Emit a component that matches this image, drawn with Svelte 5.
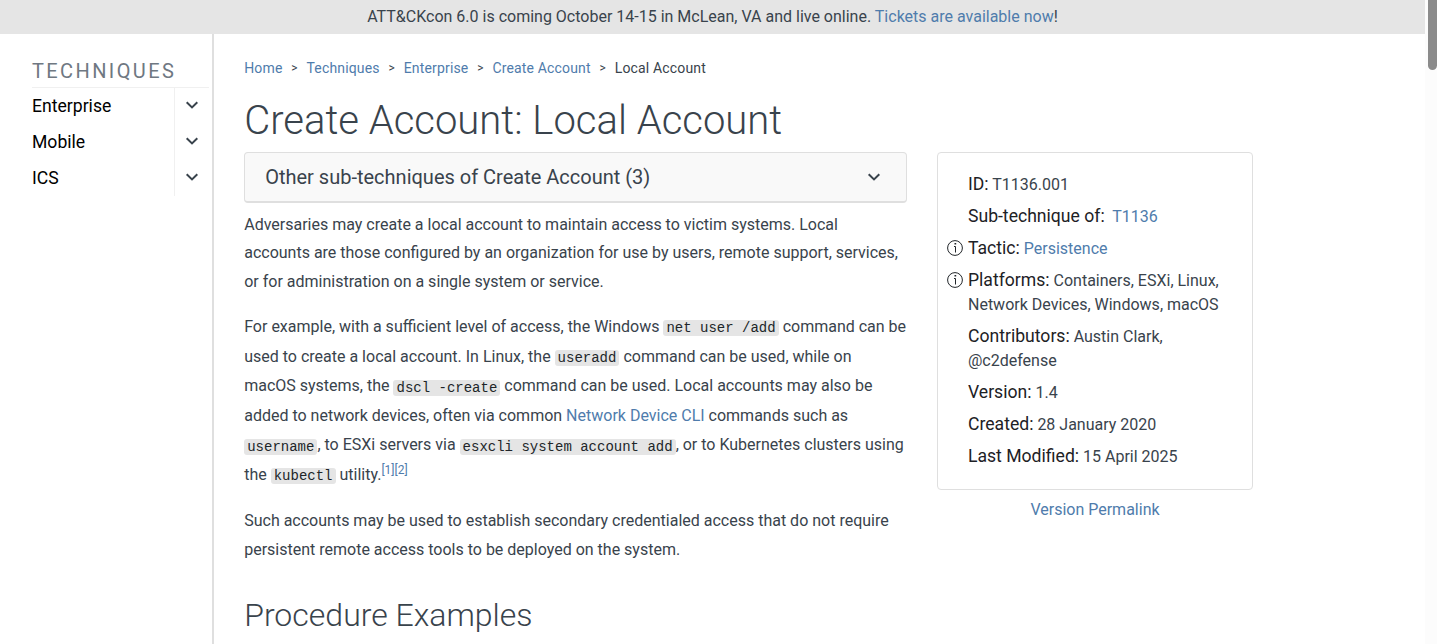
<script>
  const sections = ['Enterprise', 'Mobile', 'ICS'];
  const crumbs = ['Home', 'Techniques', 'Enterprise', 'Create Account'];
</script>

{#snippet chevron()}
  <svg class="chevron" width="14" height="10" viewBox="0 0 14 10" aria-hidden="true">
    <path d="M1.7 2.2 L7 7.4 L12.3 2.2" />
  </svg>
{/snippet}

{#snippet info()}
  <svg class="info" width="16" height="16" viewBox="0 0 16 16" aria-hidden="true">
    <circle cx="8" cy="8" r="7.4" />
    <path d="M7 6.5H8.5V12.5" />
    <rect x="7.5" y="3" width="1.7" height="1.5" />
  </svg>
{/snippet}

<div class="page">
  <div class="view">
    <div class="banner">
      ATT&amp;CKcon 6.0 is coming October 14-15 in McLean, VA and live online. <a href="#tickets">Tickets are available now</a>!
    </div>
    <div class="body">
      <nav class="sidebar">
        <div class="nav-title">TECHNIQUES</div>
        {#each sections as name}
          <div class="nav-row">
            <span class="nav-name">{name}</span>
            <span class="nav-toggle">{@render chevron()}</span>
          </div>
        {/each}
      </nav>
      <main>
        <div class="crumbs">
          {#each crumbs as crumb}
            <a href="#crumb">{crumb}</a><span class="sep">&gt;</span>
          {/each}
          <span>Local Account</span>
        </div>
        <h1>Create Account: Local Account</h1>
        <div class="columns">
          <article>
            <div class="subs">
              <span>Other sub-techniques of Create Account (3)</span>
              {@render chevron()}
            </div>
            <p class="intro">Adversaries may create a local account to maintain access to victim systems. Local<br />accounts are those configured by an organization for use by users, remote support, services,<br />or for administration on a single system or service.</p>
            <p class="example">For example, with a sufficient level of access, the Windows <code>net user /add</code> command can be<br />used to create a local account. In Linux, the <code>useradd</code> command can be used, while on<br />macOS systems, the <code>dscl -create</code> command can be used. Local accounts may also be<br />added to network devices, often via common <a href="#cli">Network Device CLI</a> commands such as<br /><code>username</code>, to ESXi servers via <code>esxcli system account add</code>, or to Kubernetes clusters using<br />the <code>kubectl</code> utility.<sup><a href="#r1">[1]</a><a href="#r2">[2]</a></sup></p>
            <p>Such accounts may be used to establish secondary credentialed access that do not require<br />persistent remote access tools to be deployed on the system.</p>
            <h2>Procedure Examples</h2>
          </article>
          <aside>
            <div class="card">
              <div class="row"><i></i><div><b>ID:</b> T1136.001</div></div>
              <div class="row"><i></i><div><b>Sub-technique of:</b>&nbsp; <a href="#t">T1136</a></div></div>
              <div class="row"><i>{@render info()}</i><div><b>Tactic:</b> <a href="#p">Persistence</a></div></div>
              <div class="row"><i>{@render info()}</i><div><b>Platforms:</b> Containers, ESXi, Linux,<br />Network Devices, Windows, macOS</div></div>
              <div class="row"><i></i><div><b>Contributors:</b> Austin Clark,<br />@c2defense</div></div>
              <div class="row"><i></i><div><b>Version:</b> 1.4</div></div>
              <div class="row"><i></i><div><b>Created:</b> 28 January 2020</div></div>
              <div class="row"><i></i><div><b>Last Modified:</b> 15 April 2025</div></div>
            </div>
            <div class="permalink"><a href="#v">Version Permalink</a></div>
          </aside>
        </div>
      </main>
    </div>
  </div>
  <div class="scroll"><div class="thumb"></div></div>
</div>

<style>
  :global(body) { overflow: hidden; }
  .page {
    display: flex;
    height: 644px;
    overflow: hidden;
    background: #fff;
    color: #39434c;
    font: 16px/24px Roboto, sans-serif;
    white-space: nowrap;
  }
  .view { flex: 1; display: flex; flex-direction: column; min-width: 0; }
  a { color: #4f7cac; text-decoration: none; }
  .banner {
    flex: none;
    box-sizing: border-box;
    height: 34px;
    padding-top: 5px;
    background: #e5e5e5;
    text-align: center;
  }
  .body { flex: 1; display: flex; min-height: 0; }
  .sidebar {
    flex: none;
    box-sizing: border-box;
    width: 214px;
    padding: 25px 3px 0 32px;
    border-right: 2px solid #dfdfdf;
  }
  .nav-title {
    height: 28px;
    border-bottom: 1px solid #f0f0f0;
    color: #6f7882;
    font-size: 20px;
    line-height: 25px;
    letter-spacing: 2.4px;
  }
  .nav-row { display: flex; height: 36px; line-height: 36px; }
  .nav-name { flex: 1; color: #000; font-size: 17.6px; }
  .nav-toggle {
    display: flex;
    justify-content: center;
    box-sizing: border-box;
    width: 35px;
    padding-top: 12.4px;
    border-left: 1px solid #f0f0f0;
  }
  .chevron { flex: none; fill: none; stroke: #39434c; stroke-width: 2; }
  main { flex: 1; padding: 24px 0 0 30.2px; }
  .crumbs { display: flex; height: 20px; font-size: 14px; line-height: 20px; letter-spacing: 0.16px; }
  .sep { width: 24px; text-align: center; font-size: 12px; }
  h1, h2 { margin: 0; font-weight: 300; }
  h1 { height: 74px; padding-top: 19px; box-sizing: border-box; font-size: 40px; line-height: 48px; }
  .columns { display: flex; gap: 30px; }
  article { flex: none; width: 662.8px; }
  .subs {
    display: flex;
    align-items: center;
    justify-content: space-between;
    box-sizing: border-box;
    height: 51px;
    margin-bottom: 7.5px;
    padding: 0 25px 0 20px;
    border: 1px solid #dfdfdf;
    border-bottom-width: 2px;
    border-radius: 4px;
    background: #f9f9f9;
    font-size: 20px;
  }
  p { margin: 0 0 16px; line-height: 28.8px; }
  .intro { margin-bottom: 15.1px; }
  .example { margin-bottom: 17.6px; line-height: 29.6px; }
  code {
    position: relative;
    top: 0.5px;
    padding: 0 3px;
    border-radius: 3px;
    background: #e5e5e5;
    color: #212529;
    font: 14px "Courier New", "Liberation Mono", monospace;
  }
  sup { font-size: 12px; line-height: 0; vertical-align: baseline; position: relative; top: -6px; }
  h2 { padding-top: 15.3px; font-size: 32px; line-height: 38px; }
  aside { width: 316px; }
  .card {
    box-sizing: border-box;
    height: 338px;
    padding: 20px 9px 0;
    border: 1px solid #dfdfdf;
    border-radius: 4px;
  }
  .row { display: flex; margin-bottom: 8px; }
  .row i { flex: none; width: 21px; padding-top: 3px; line-height: 0; }
  .row b { color: #1d2125; font-size: 17.6px; font-weight: 400; line-height: 0; }
  .info { fill: none; stroke: #212529; stroke-width: 1; }
  .info rect { fill: #212529; stroke: none; }
  .permalink { padding-top: 8px; text-align: center; }
  .scroll { flex: none; width: 9px; padding-left: 3px; background: #fcfcfc; }
  .thumb { height: 70px; border-radius: 0 0 5px 5px; background: #8b8b8b; }
</style>
